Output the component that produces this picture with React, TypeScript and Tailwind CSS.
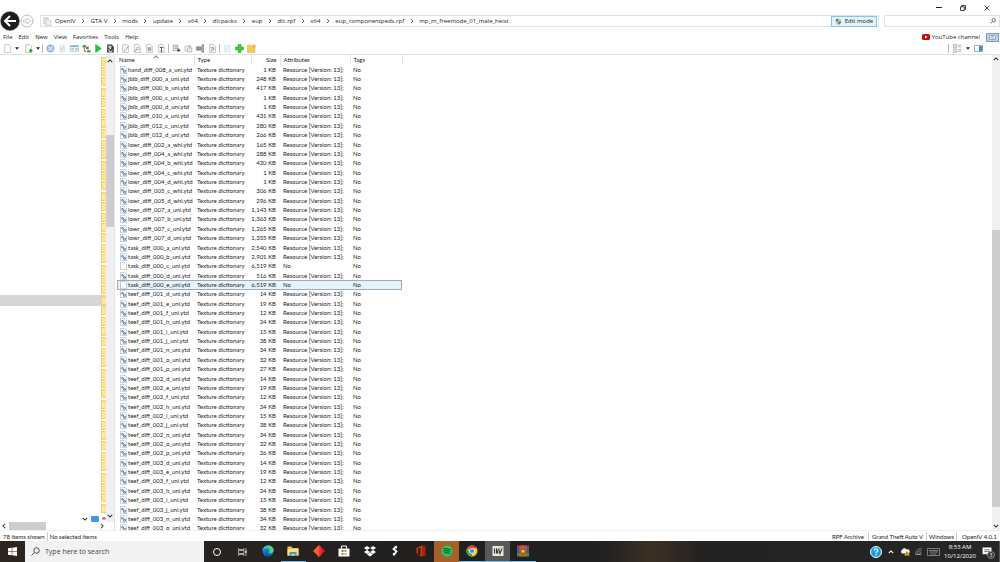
import type { ReactNode } from 'react';

const UI_FONT = "font-['Open_Sans','Noto_Sans',sans-serif]";

interface FileRow {
  name: string;
  size: string;
  plain?: boolean;
  selected?: boolean;
}

const path = [
  'OpenIV',
  'GTA V',
  'mods',
  'update',
  'x64',
  'dlcpacks',
  'eup',
  'dlc.rpf',
  'x64',
  'eup_componentpeds.rpf',
  'mp_m_freemode_01_male_heist',
];

const menus = ['File', 'Edit', 'New', 'View', 'Favorites', 'Tools', 'Help'];

const files: FileRow[] = [
  { name: 'hand_diff_008_a_uni.ytd', size: '1' },
  { name: 'jbib_diff_000_a_uni.ytd', size: '248' },
  { name: 'jbib_diff_000_b_uni.ytd', size: '417' },
  { name: 'jbib_diff_000_c_uni.ytd', size: '1' },
  { name: 'jbib_diff_000_d_uni.ytd', size: '1' },
  { name: 'jbib_diff_010_a_uni.ytd', size: '431' },
  { name: 'jbib_diff_012_c_uni.ytd', size: '280' },
  { name: 'jbib_diff_012_d_uni.ytd', size: '266' },
  { name: 'lowr_diff_002_a_whi.ytd', size: '165' },
  { name: 'lowr_diff_004_a_whi.ytd', size: '288' },
  { name: 'lowr_diff_004_b_whi.ytd', size: '420' },
  { name: 'lowr_diff_004_c_whi.ytd', size: '1' },
  { name: 'lowr_diff_004_d_whi.ytd', size: '1' },
  { name: 'lowr_diff_005_c_whi.ytd', size: '306' },
  { name: 'lowr_diff_005_d_whi.ytd', size: '296' },
  { name: 'lowr_diff_007_a_uni.ytd', size: '1,143' },
  { name: 'lowr_diff_007_b_uni.ytd', size: '1,363' },
  { name: 'lowr_diff_007_c_uni.ytd', size: '1,265' },
  { name: 'lowr_diff_007_d_uni.ytd', size: '1,355' },
  { name: 'task_diff_000_a_uni.ytd', size: '2,540' },
  { name: 'task_diff_000_b_uni.ytd', size: '2,901' },
  { name: 'task_diff_000_c_uni.ytd', size: '6,519', plain: true },
  { name: 'task_diff_000_d_uni.ytd', size: '516' },
  { name: 'task_diff_000_e_uni.ytd', size: '6,519', plain: true, selected: true },
  { name: 'teef_diff_001_d_uni.ytd', size: '14' },
  { name: 'teef_diff_001_e_uni.ytd', size: '19' },
  { name: 'teef_diff_001_f_uni.ytd', size: '12' },
  { name: 'teef_diff_001_h_uni.ytd', size: '24' },
  { name: 'teef_diff_001_i_uni.ytd', size: '15' },
  { name: 'teef_diff_001_j_uni.ytd', size: '38' },
  { name: 'teef_diff_001_n_uni.ytd', size: '34' },
  { name: 'teef_diff_001_o_uni.ytd', size: '32' },
  { name: 'teef_diff_001_p_uni.ytd', size: '27' },
  { name: 'teef_diff_002_d_uni.ytd', size: '14' },
  { name: 'teef_diff_002_e_uni.ytd', size: '19' },
  { name: 'teef_diff_002_f_uni.ytd', size: '12' },
  { name: 'teef_diff_002_h_uni.ytd', size: '24' },
  { name: 'teef_diff_002_i_uni.ytd', size: '15' },
  { name: 'teef_diff_002_j_uni.ytd', size: '38' },
  { name: 'teef_diff_002_n_uni.ytd', size: '34' },
  { name: 'teef_diff_002_o_uni.ytd', size: '32' },
  { name: 'teef_diff_002_p_uni.ytd', size: '26' },
  { name: 'teef_diff_003_d_uni.ytd', size: '14' },
  { name: 'teef_diff_003_e_uni.ytd', size: '19' },
  { name: 'teef_diff_003_f_uni.ytd', size: '12' },
  { name: 'teef_diff_003_h_uni.ytd', size: '24' },
  { name: 'teef_diff_003_i_uni.ytd', size: '15' },
  { name: 'teef_diff_003_j_uni.ytd', size: '38' },
  { name: 'teef_diff_003_n_uni.ytd', size: '34' },
  { name: 'teef_diff_003_o_uni.ytd', size: '32' },
];

const SELECTED_FOLDER = 23;
const folders = Array.from({ length: 44 }, (_, i) => i);

function Chevron({ dir, className = '' }: { dir: 'up' | 'down' | 'left' | 'right'; className?: string }) {
  const d = {
    up: 'M1 5.5 4 2.5 7 5.5',
    down: 'M1 2.5 4 5.5 7 2.5',
    left: 'M5.5 1 2.5 4 5.5 7',
    right: 'M2.5 1 5.5 4 2.5 7',
  }[dir];
  return (
    <svg viewBox="0 0 8 8" className={`size-[6px] shrink-0 ${className}`} fill="none" stroke="currentColor" strokeWidth="1.4">
      <path d={d} />
    </svg>
  );
}

function FileIcon({ plain }: { plain?: boolean }) {
  return (
    <svg viewBox="0 0 14 16" className="h-[8px] w-[7px] shrink-0">
      <path d="M1 .7h9L13 4v11.3H1z" fill="#fbfbfb" stroke="#a9adb1" strokeWidth="1.2" />
      {!plain && (
        <>
          <circle cx="5" cy="6.6" r="2.6" fill="#5b8fc0" />
          <circle cx="9" cy="10.4" r="3" fill="#5487b8" />
          <circle cx="5.2" cy="6.8" r=".9" fill="#fff" />
          <circle cx="9" cy="10.4" r="1" fill="#fff" />
        </>
      )}
    </svg>
  );
}

function Sheet({ children }: { children?: ReactNode }) {
  return (
    <>
      <path d="M3 1h7l3 3v11H3z" fill="#fff" stroke="#999" />
      {children}
    </>
  );
}

interface Tool {
  label: string;
  icon: ReactNode;
}

const sheetTools: Tool[] = [
  { label: 'Edit', icon: <Sheet><path d="M14 3 7 12l-2 1" fill="none" stroke="#777" strokeWidth="1.3" /></Sheet> },
  { label: 'View file', icon: <Sheet><circle cx="8.5" cy="8" r="2.6" fill="none" stroke="#777" /><path d="m6.5 10-4 4" stroke="#777" strokeWidth="1.5" /></Sheet> },
  { label: 'Properties', icon: <Sheet><path d="M5.500 6h5v6h-5zM5.500 8h5M5.500 10h5" fill="#ddd" stroke="#888" /></Sheet> },
  { label: 'Text view', icon: <Sheet><path d="M5 6h6M8 6v7M6.500 13h3" stroke="#444" strokeWidth="1.6" /></Sheet> },
];

const clipTools: Tool[] = [
  { label: 'Import', icon: <><path d="M2 2h8v10H2zM4 5h5M4 8h5" fill="#eee" stroke="#777" /><path d="M9 11h6M12 8v6" stroke="#444" strokeWidth="2" /></> },
  { label: 'Export', icon: <><path d="M2 4h8v8H2z" fill="#fff" stroke="#888" /><path d="M6 7h8v7H6z" fill="#eee" stroke="#999" /><path d="M9 2l4 3" stroke="#777" /></> },
  { label: 'Rename', icon: <><path d="M1 5h9v6H1z" fill="#999" stroke="#666" /><path d="M10 2h4M10 14h4M12.500 2v12" stroke="#444" strokeWidth="1.6" /></> },
  { label: 'Defragment', icon: <Sheet><path d="M5 6h6M5 9h6M5 12h4M9 7l2 4" stroke="#777" strokeWidth="1.2" /></Sheet> },
];

const appTools: Tool[] = [
  { label: 'Windows view', icon: <><circle cx="8" cy="8" r="6.500" fill="#a9c4ea" stroke="#6f96cf" /><path d="M4 5l4 3 4-4M4 11l4-3 3 4" fill="none" stroke="#eef5ff" strokeWidth="1.6" /></> },
  { label: 'Refresh', icon: <><path d="M3 2h9v12H3z" fill="#eee" stroke="#ddd" /><path d="M5 11l6-6" stroke="#ccc" strokeWidth="2" /></> },
  { label: 'Options', icon: <><path d="M1 3h14v10H1z" fill="#f4fafd" stroke="#8b9aa5" /><path d="M1 4h14" stroke="#6fa5ce" strokeWidth="2" /><path d="m3 8 1.500 2L7 6.500M9 9h5" fill="none" stroke="#4384b7" strokeWidth="1.3" /></> },
  { label: 'Tree', icon: <><path d="M1 2h6v4H1z" fill="#1faa36" /><path d="M4 6v7h4" fill="none" stroke="#444" strokeWidth="1.3" /><path d="M7 5h5v4H7z" fill="#d13a30" /><path d="M9 11h6v4H9z" fill="#21b33a" /></> },
  { label: 'Run', icon: <path d="M3 1l10 7-10 7z" fill="#26c93c" stroke="#159a2a" /> },
  { label: 'Archive', icon: <><path d="M2 1h8l4 4v10H2z" fill="#3e4246" /><path d="M5 4h4v2H5zM9 8a3 3 0 1 0 2 3" fill="none" stroke="#fff" strokeWidth="1.5" /></> },
];

function ToolButton({ label, icon }: Tool) {
  return (
    <button type="button" aria-label={label} className="grid w-[12px] place-items-center">
      <svg viewBox="0 0 16 16" className="size-[9px]">{icon}</svg>
    </button>
  );
}

function Divider() {
  return <span className="mx-px h-[9px] w-px bg-[#b8b8b8]" />;
}

function Caret() {
  return (
    <svg viewBox="0 0 8 5" className="h-[3px] w-[4px]">
      <path d="M0 0h8L4 5z" fill="#222" />
    </svg>
  );
}

function TitleBar() {
  return (
    <div className="flex h-[15px] justify-end gap-[12px] pr-[7px] text-[#222]">
      <button type="button" aria-label="Minimize" className="grid w-[12px] place-items-center">
        <span className="h-px w-[6px] bg-current" />
      </button>
      <button type="button" aria-label="Restore" className="grid w-[12px] place-items-center">
        <svg viewBox="0 0 12 12" className="size-[6px]" fill="none" stroke="currentColor" strokeWidth="1.7">
          <path d="M1 3.500h7.500V11H1zM3.500 3.500V1H11v7.500H8.500" />
        </svg>
      </button>
      <button type="button" aria-label="Close" className="grid w-[12px] place-items-center">
        <svg viewBox="0 0 12 12" className="size-[6px]" stroke="currentColor" strokeWidth="1.5">
          <path d="M1 1l10 10M11 1 1 11" />
        </svg>
      </button>
    </div>
  );
}

function AddressRow() {
  return (
    <div className="flex h-[12px] items-center">
      <button type="button" aria-label="Back" className="-my-1 shrink-0">
        <svg viewBox="0 0 20 20" className="size-[20px]">
          <circle cx="10" cy="10" r="9.500" fill="#1c1c1c" stroke="#777" strokeWidth=".5" />
          <path d="M16 10H5.500M10 5l-5 5 5 5" fill="none" stroke="#fff" strokeWidth="2" />
        </svg>
      </button>
      <button type="button" aria-label="Forward" className="shrink-0">
        <svg viewBox="0 0 14 14" className="size-[14px]">
          <circle cx="7" cy="7" r="6" fill="#fafafa" stroke="#bbb" />
          <path d="M3.500 6h3.500V4l3.500 3L7 10V8H3.500z" fill="#fff" stroke="#b5b5b5" strokeWidth=".7" />
        </svg>
      </button>
      <div className="ml-[6px] flex h-[12px] flex-1 items-center border border-[#e3e3e3] pl-[2px]">
        <svg viewBox="0 0 16 16" className="mr-[3px] size-[9px]">
          <path d="M1 1h8v11H1z" fill="#dfe8ee" stroke="#b9c6cf" />
          <path d="M5 4h6l3 3v8H5z" fill="#eef3f6" stroke="#a9b9c4" />
        </svg>
        <ol className="flex flex-1 items-center">
          {path.map((part, i) => (
            <li key={i} className="flex items-center">
              {i > 0 && (
                <span className="grid w-[15px] place-items-center">
                  <svg viewBox="0 0 8 8" className="size-[4px]" fill="none" stroke="#555" strokeWidth="1.8">
                    <path d="M2 0l4 4-4 4" />
                  </svg>
                </span>
              )}
              <a href="#" className="text-[6px] leading-[9px]">{part}</a>
            </li>
          ))}
        </ol>
        <button
          type="button"
          className="mr-px flex h-[11px] w-[46px] items-center justify-center gap-[3px] border border-[#85c5e8] bg-[#e3f2fb] text-[6px] leading-[9px]"
        >
          <svg viewBox="0 0 16 16" className="size-[7px]">
            <path d="M8 1 2 3v5c0 4 3 6 6 7z" fill="#2d7fd0" />
            <path d="M8 1l6 2v5c0 4-3 6-6 7z" fill="#f2cf3b" />
            <path d="M2 8h6v7C5 14 2 12 2 8z" fill="#f2cf3b" />
            <path d="M8 8h6c0 4-3 6-6 7z" fill="#2d7fd0" />
          </svg>
          Edit mode
        </button>
      </div>
      <label className="ml-[5px] flex h-[12px] w-[116px] items-center border border-[#e3e3e3] pr-[3px]">
        <input type="search" aria-label="Search files" className="h-[9px] min-w-0 flex-1 text-[6px] outline-none" />
        <svg viewBox="0 0 12 12" className="size-[6px]" fill="none" stroke="#333" strokeWidth="1.4">
          <circle cx="7.500" cy="4.500" r="3.500" />
          <path d="M5 7l-4 4" />
        </svg>
      </label>
    </div>
  );
}

function MenuRow() {
  return (
    <div className="mt-[5px] flex h-[10px] items-center justify-between pr-px pl-[3px] text-[6px] leading-[9px]">
      <nav className="flex gap-[6px]">
        {menus.map((menu) => (
          <button key={menu} type="button">{menu}</button>
        ))}
      </nav>
      <div className="flex items-center">
        <a href="#" className="flex items-center gap-[2px]">
          <svg viewBox="0 0 16 12" className="h-[6px] w-[8px]">
            <rect width="16" height="12" rx="3" fill="#c00d0d" />
            <path d="M6 3l5 3-5 3z" fill="#fff" />
          </svg>
          YouTube channel
        </a>
        <button type="button" aria-label="Gallery" className="ml-[6px] grid h-[9px] w-[13px] place-items-center border border-[#7f9fc4] bg-[#bcd0e8]">
          <svg viewBox="0 0 14 10" className="h-[5px] w-[7px]">
            <rect x=".7" y=".7" width="12.600" height="8.600" rx="2" fill="#e8eef5" stroke="#56708f" strokeWidth="1.2" />
            <circle cx="7" cy="5" r="2" fill="none" stroke="#56708f" />
          </svg>
        </button>
      </div>
    </div>
  );
}

function Toolbar() {
  return (
    <div className="flex h-[13px] items-center border-b border-[#e2e2e2] pr-[17px] pl-px">
      <ToolButton label="New" icon={<Sheet />} />
      <button type="button" aria-label="New options" className="mr-[2px] grid w-[7px] place-items-center"><Caret /></button>
      <ToolButton label="New archive" icon={<Sheet><path d="M9 12h6M12 9v6" stroke="#1fae38" strokeWidth="3" /></Sheet>} />
      <button type="button" aria-label="Archive options" className="grid w-[7px] place-items-center"><Caret /></button>
      <Divider />
      {appTools.map((tool) => <ToolButton key={tool.label} {...tool} />)}
      <Divider />
      {sheetTools.map((tool) => <ToolButton key={tool.label} {...tool} />)}
      <Divider />
      {clipTools.map((tool) => <ToolButton key={tool.label} {...tool} />)}
      <Divider />
      <ToolButton label="Select all" icon={<path d="M3 2h10v12H3zM5 5h6M5 8h4" fill="#eff7f7" stroke="#c3dcdc" />} />
      <ToolButton label="Add" icon={<path d="M5.500 1h5v4.500H15v5h-4.500V15h-5v-4.500H1v-5h4.500z" fill="#3fcf35" stroke="#229c22" />} />
      <ToolButton label="New folder" icon={<><path d="M1 2h6l2 2h5v11H1z" fill="#f4cb5c" stroke="#dfae3c" /><path d="M10 1h5v5h-5z" fill="#f7a94b" /></>} />
      <div className="ml-auto flex items-center">
        <Divider />
        <button type="button" aria-label="List style" className="ml-[3px] flex items-center gap-[4px]">
          <svg viewBox="0 0 16 16" className="size-[9px]">
            <path d="M1 1h5v6H1zM1 9h5v6H1z" fill="#e5e5e5" stroke="#999" />
            <path d="M8 2h7M8 5h7M8 10h7M8 13h7" stroke="#8eb2dd" strokeWidth="1.500" />
          </svg>
          <Caret />
        </button>
        <button type="button" aria-label="Preview pane" className="ml-[4px]">
          <svg viewBox="0 0 18 14" className="h-[7px] w-[9px]">
            <path d="M1 1h16v12H1z" fill="#fff" stroke="#8a9299" strokeWidth="1.500" />
            <path d="M10 2h6.500v10.500H10z" fill="#2f94e0" />
          </svg>
        </button>
      </div>
    </div>
  );
}

function FolderTree() {
  return (
    <div className="flex w-[115px] shrink-0 border-r border-[#dfe5ea]">
      <div className="flex min-w-0 flex-1 flex-col">
        <ul className="min-h-0 flex-1 overflow-hidden pt-px">
          <li className="grid h-[468px] auto-rows-fr">
            {folders.map((i) => (
              <div key={i} className={`flex items-center ${i === SELECTED_FOLDER ? 'bg-[#d6d6d6]' : ''}`}>
                <span className="ml-auto h-[9px] w-[5px] rounded-[1px] border-y border-l border-[#f0cf72] bg-[#ffe694]" />
              </div>
            ))}
            <div className="flex items-center justify-end text-[6px] leading-[9px]">
              <Chevron dir="down" className="mr-[3px] text-[#333]" />
              <span className="mr-[3px] h-[6px] w-[8px] rounded-[1px] bg-[#3f97e8]" />
              <span className="w-[4px] overflow-hidden">eup</span>
            </div>
          </li>
        </ul>
        <div className="flex h-[8px] items-center px-px text-[#333]">
          <Chevron dir="left" />
          <span className="ml-[2px] h-[8px] w-[37px] bg-[#cdcdcd]" />
          <Chevron dir="right" className="ml-auto" />
        </div>
      </div>
      <div className="mb-[8px] flex w-[8px] flex-col items-center bg-[#f0f0f0] py-[3px] text-[#333]">
        <Chevron dir="up" />
        <span className="mt-[71px] h-[92px] w-full bg-[#cdcdcd]" />
        <Chevron dir="down" className="mt-auto" />
      </div>
    </div>
  );
}

function FileTable() {
  return (
    <div className="ml-[2px] min-w-0 flex-1 overflow-hidden font-['Lato','Liberation_Sans',sans-serif] text-[6px] leading-[8px]">
      <table className="h-[478px] w-[285px] table-fixed border-collapse whitespace-nowrap">
        <thead>
          <tr className="h-[10px] text-left [&>th]:border-r [&>th]:border-[#e4e4e4] [&>th]:py-0 [&>th]:font-normal">
            <th className="relative w-[77px] pl-[2px]">
              Name
              <Chevron dir="up" className="absolute -top-px left-[36px] text-[#888]" />
            </th>
            <th className="w-[57px] pl-[3px]">Type</th>
            <th className="w-[29px] pr-[3px] text-right">Size</th>
            <th className="w-[70px] pl-[3px]">Attributes</th>
            <th className="w-[52px] pl-[3px]">Tags</th>
          </tr>
        </thead>
        <tbody>
          {files.map((file) => (
            <tr
              key={file.name}
              className={`h-[9px] [&>td]:py-0 ${file.selected ? 'bg-[#e5f3fd] outline outline-1 -outline-offset-1 outline-[#9eabb5]' : ''}`}
            >
              <td className="pl-[3px]">
                <div className="flex items-center gap-px">
                  <FileIcon plain={file.plain} />
                  {file.name}
                </div>
              </td>
              <td className="pl-[3px]">Texture dictionary</td>
              <td className="pr-[4px] text-right">{file.size} KB</td>
              <td className="pl-[3px]">{file.plain ? 'No' : 'Resource [Version: 13];'}</td>
              <td className="pl-[3px]">No</td>
            </tr>
          ))}
        </tbody>
      </table>
    </div>
  );
}

function StatusBar() {
  return (
    <footer className="flex h-[11px] items-center border-t border-[#f0f0f0] bg-white px-[3px] font-['Lato','Liberation_Sans',sans-serif] text-[6px] leading-[9px]">
      <span className="border-r border-[#ccc] pr-[2px]">78 items shown</span>
      <span className="pl-[2px]">No selected items</span>
      <span className="ml-auto border-r border-[#ccc] pr-[4px]">RPF Archive</span>
      <span className="border-r border-[#ccc] px-[3px]">Grand Theft Auto V</span>
      <span className="border-r border-[#ccc] px-[2px]">Windows</span>
      <span className="pl-[5px]">OpenIV 4.0.1</span>
    </footer>
  );
}

interface TaskApp {
  label: string;
  tile?: string;
  open?: boolean;
  icon: ReactNode;
}

const taskApps: TaskApp[] = [
  {
    label: 'Edge',
    icon: (
      <>
        <circle cx="12" cy="12" r="11" fill="#1577c8" />
        <path d="M1 11C2 4 7 1 12 1c7 0 11 5 11 9 0 4-3 6-6 6-2 0-3-1-3-2s1-1 1-3c0-2-2-4-5-4-4 0-8 2-9 4z" fill="#3cc6b2" />
        <path d="M12 1c7 0 11 5 11 9 0 4-3 6-6 6-2 0-3-1-3-2 2 0 5-3 3-7-2-3-5-5-5-6z" fill="#65d45f" />
        <path d="M9 12c-1 5 3 9 8 8l4-2c-2 3-5 5-9 5-5-1-7-7-3-11z" fill="#0c509c" />
      </>
    ),
  },
  {
    label: 'File Explorer',
    open: true,
    icon: (
      <>
        <path d="M1 3h8l2 3h12v15H1z" fill="#f2c34d" />
        <path d="M1 8h22v13H1z" fill="#ffdc7c" />
        <path d="M5 22v-8h14v8h-4v-4H9v4z" fill="#3c9ce0" />
      </>
    ),
  },
  {
    label: 'Diamond',
    icon: (
      <>
        <path d="M12 0v24L0 12z" fill="#ff5a2b" />
        <path d="M12 0v24l12-12z" fill="#e51b1b" />
        <path d="m12 0 4 4v16l-4 4z" fill="#f8311f" />
      </>
    ),
  },
  {
    label: 'Store',
    icon: (
      <>
        <path d="M7 7V2h10v5" fill="none" stroke="#fff" strokeWidth="2" />
        <path d="M1 7h22v16H1z" fill="#fff" />
        <path d="M7 10h4v4H7z" fill="#e9502a" />
        <path d="M13 10h4v4h-4z" fill="#7db72f" />
        <path d="M7 16h4v4H7z" fill="#2aa1dc" />
        <path d="M13 16h4v4h-4z" fill="#f3b51f" />
      </>
    ),
  },
  {
    label: 'Dropbox',
    icon: <path d="M6 2l6 4-6 4-6-4zM18 2l6 4-6 4-6-4zM6 10l6 4-6 4-6-4zM18 10l6 4-6 4-6-4zM12 15l6 4-6 4-6-4z" fill="#fff" />,
  },
  {
    label: 'Streamlabs',
    icon: <path d="M15 2 9 8l6 5-6 8M15 2l-1 5M9 21l1-5" fill="none" stroke="#fff" strokeWidth="3.500" />,
  },
  {
    label: 'Office',
    icon: (
      <>
        <path d="M3 6 14 1v22L3 19l8 1V5L6 7v9l-3 2z" fill="#d83b01" />
        <path d="m14 1 7 2v18l-7 2z" fill="#b01f12" />
      </>
    ),
  },
  {
    label: 'Spotify',
    tile: 'bg-[#a85f28]',
    icon: (
      <>
        <circle cx="12" cy="12" r="11" fill="#20d161" />
        <path d="M5 8c5-1 10-1 14 2M6 12c4-1 8-1 12 2M7 16c3-1 6-1 9 1" fill="none" stroke="#18301f" strokeWidth="2" strokeLinecap="round" />
      </>
    ),
  },
  {
    label: 'Chrome',
    open: true,
    icon: (
      <>
        <circle cx="12" cy="12" r="11" fill="#f5c52c" />
        <path d="M12 12 2.500 6.500A11 11 0 0 1 21.500 6.500H12z" fill="#e54335" />
        <path d="M12 12v11A11 11 0 0 1 2.500 6.500L7.500 15z" fill="#33a852" />
        <circle cx="12" cy="12" r="5.500" fill="#fff" />
        <circle cx="12" cy="12" r="4.200" fill="#4484f3" />
      </>
    ),
  },
  {
    label: 'OpenIV',
    tile: 'bg-[#585858]',
    open: true,
    icon: (
      <>
        <path d="M1 2h22v20H1z" fill="#e9e7df" />
        <path d="M5 7v10M9 17V7l3 10M13 7l3 10 4-10" fill="none" stroke="#333" strokeWidth="2.200" />
        <path d="M15 4h7v4h-7z" fill="#d8c488" />
      </>
    ),
  },
  {
    label: 'WinRAR',
    open: true,
    icon: (
      <>
        <path d="M0 1h24v7H0z" fill="#a6316b" />
        <path d="M0 8h24v7H0z" fill="#3558c7" />
        <path d="M0 15h24v8H0z" fill="#3a9144" />
        <path d="M5 1h3v22H5zM16 1h3v22h-3z" fill="#d05b2c" />
        <path d="M9 1h6v22H9z" fill="#b5653a" />
        <path d="M8 9h8v7H8z" fill="#f0cf51" stroke="#7b4a16" strokeWidth="1.500" />
      </>
    ),
  },
];

function Taskbar() {
  return (
    <div className="flex h-[21px] items-stretch bg-[#232323] bg-linear-to-r from-[#2c2520] from-0% via-[#202020] via-50% to-[#262626] text-white">
      <button type="button" aria-label="Start" className="grid w-[25px] place-items-center">
        <svg viewBox="0 0 18 18" className="size-[9px]" fill="#fff">
          <path d="M0 2.500 7.500 1.500v7H0zM8.500 1.400 18 0v8.500H8.500zM0 9.500h7.500v7L0 15.500zM8.500 9.500H18V18l-9.500-1.400z" />
        </svg>
      </button>
      <label className="flex w-[179px] items-center gap-[5px] bg-[#f2f2f2] pl-[6px] text-[#444]">
        <svg viewBox="0 0 18 18" className="size-[9px]" fill="none" stroke="#333" strokeWidth="1.700">
          <circle cx="11" cy="7" r="5.500" />
          <path d="M7 11l-6 6" />
        </svg>
        <input
          type="text"
          aria-label="Search"
          placeholder="Type here to search"
          className="min-w-0 flex-1 text-[7px] leading-[10px] outline-none placeholder:text-[#444]"
        />
      </label>
      <button type="button" aria-label="Cortana" className="grid w-[25px] place-items-center">
        <span className="size-[8px] rounded-full border border-white" />
      </button>
      <button type="button" aria-label="Task view" className="grid w-[26px] place-items-center">
        <svg viewBox="0 0 18 16" className="h-[8px] w-[9px]" fill="none" stroke="#ddd" strokeWidth="1.400">
          <path d="M1 0v3h11V0M1 5h11v6H1zM1 16v-3h11v3M16 0v16M14.500 6h3v3h-3z" />
        </svg>
      </button>
      <div className="grid w-[281px] auto-cols-fr grid-flow-col">
        {taskApps.map((app) => (
          <button
            key={app.label}
            type="button"
            aria-label={app.label}
            className={`grid place-items-center border-b ${app.tile ?? ''} ${app.open ? 'border-[#76b9ed]' : 'border-transparent'}`}
          >
            <svg viewBox="0 0 24 24" className="size-[12px]">{app.icon}</svg>
          </button>
        ))}
      </div>
      <div className="flex flex-1 items-center justify-end bg-linear-to-r from-transparent from-15% via-[#3c3024] via-25% to-transparent to-36%">
        <svg viewBox="0 0 24 24" className="size-[12px]">
          <circle cx="12" cy="12" r="11" fill="#1b9ae4" stroke="#fff" strokeWidth="2" />
          <path d="M8.500 9.500c0-5 7-4.500 7-.5 0 2.500-3.500 2.500-3.500 5.500M12 16.500v2.500" fill="none" stroke="#fff" strokeWidth="2.400" />
        </svg>
        <Chevron dir="up" className="ml-[6px]" />
        <svg viewBox="0 0 20 16" className="ml-[6px] h-[8px] w-[10px]">
          <path d="M4 11a4 4 0 0 1 0-7 5 5 0 0 1 9-1 4 4 0 0 1 4 8z" fill="#eee" />
          <path d="m14 5 5.500 10h-11z" fill="#f7b718" />
          <path d="M14 8v4M14 13v1" stroke="#333" strokeWidth="1.300" />
        </svg>
        <svg viewBox="0 0 14 14" className="ml-[5px] size-[7px]" fill="none" stroke="#bbb" strokeWidth="1.300">
          <path d="M1 13A12 12 0 0 1 13 1M5 13a8 8 0 0 1 8-8M9 13a4 4 0 0 1 4-4M2 13h11" />
        </svg>
        <svg viewBox="0 0 26 16" className="ml-[5px] h-[8px] w-[13px]" fill="none" stroke="#bbb" strokeWidth="1.200">
          <path d="M1 1h24v14H1zM4 5h18M4 8h18M7 12h12" strokeDasharray="none" />
        </svg>
        <div className="ml-[3px] w-[34px] text-center text-[6px] leading-[9px]">
          <div>8:53 AM</div>
          <div>10/12/2020</div>
        </div>
        <button type="button" aria-label="Notifications" className="relative ml-[5px] h-[14px] w-[15px]">
          <svg viewBox="0 0 18 18" className="size-[10px]">
            <path d="M1 1h16v12h-4v4l-4-4H1z" fill="#fff" />
            <path d="M4 5h10M4 8h10" stroke="#333" strokeWidth="1.200" />
          </svg>
          <span className="absolute right-[2px] bottom-0 grid size-[8px] place-items-center rounded-full border border-[#888] bg-[#333] text-[5px] leading-[6px]">3</span>
        </button>
        <span className="ml-[2px] h-full w-px bg-[#555]" />
      </div>
    </div>
  );
}

export default function App() {
  return (
    <div className={`flex h-screen flex-col overflow-hidden bg-white text-[#1b1b1b] ${UI_FONT}`}>
      <header>
        <TitleBar />
        <AddressRow />
        <MenuRow />
        <Toolbar />
      </header>
      <main className="flex min-h-0 flex-1">
        <FolderTree />
        <FileTable />
        <div className="flex w-[8px] flex-col items-center bg-[#f0f0f0] pt-px pb-px text-[#333]">
          <Chevron dir="up" />
          <span className="mt-auto h-[277px] w-full bg-[#cdcdcd]" />
          <Chevron dir="down" className="mt-[16px]" />
        </div>
      </main>
      <StatusBar />
      <Taskbar />
    </div>
  );
}
